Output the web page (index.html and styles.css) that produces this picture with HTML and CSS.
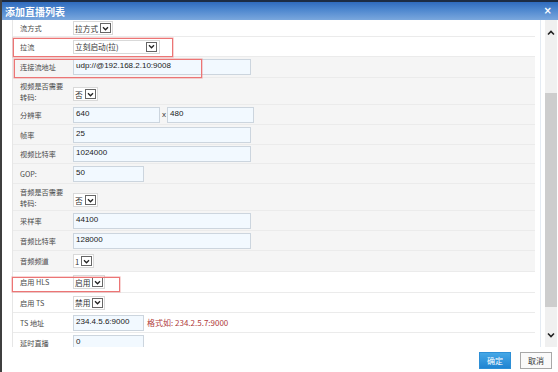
FILE: index.html
```html
<!DOCTYPE html>
<html lang="zh-CN">
<head>
    <meta charset="UTF-8">
    <title>添加直播列表</title>
    <link rel="stylesheet" href="styles.css">
</head>
<body>

    <div class="dialog">
        <!-- Title bar -->
        <div class="titlebar">
            <span class="title">添加直播列表</span>
            <span class="close">×</span>
        </div>

        <div class="main">
            <div class="scroll">
                <div class="form">
                    <div class="row h17">
                        <div class="label">流方式</div>
                        <div class="field"><span class="select">拉方式<i class="arrow"><svg viewBox="0 0 8 6"><path d="M1 1.5 L4 4.5 L7 1.5" /></svg></i></span></div>
                    </div>
                    <div class="row h20">
                        <div class="label">拉流</div>
                        <div class="field"><span class="select w87">立刻启动(拉)<i class="arrow"><svg viewBox="0 0 8 6"><path d="M1 1.5 L4 4.5 L7 1.5" /></svg></i></span></div>
                    </div>
                    <div class="row h21 gray">
                        <div class="label">连接流地址</div>
                        <div class="field"><span class="input long">udp://@192.168.2.10:9008</span></div>
                    </div>
                    <div class="row h27 gray">
                        <div class="label two">视频是否需要<br>转码:</div>
                        <div class="field"><span class="select low">否<i class="arrow"><svg viewBox="0 0 8 6"><path d="M1 1.5 L4 4.5 L7 1.5" /></svg></i></span></div>
                    </div>
                    <div class="row h20 gray">
                        <div class="label">分辨率</div>
                        <div class="field"><span class="input half">640</span><span class="times">x</span><span class="input half">480</span></div>
                    </div>
                    <div class="row h20 gray">
                        <div class="label">帧率</div>
                        <div class="field"><span class="input long">25</span></div>
                    </div>
                    <div class="row h19 gray">
                        <div class="label">视频比特率</div>
                        <div class="field"><span class="input long">1024000</span></div>
                    </div>
                    <div class="row h20 gray">
                        <div class="label">GOP:</div>
                        <div class="field"><span class="input short">50</span></div>
                    </div>
                    <div class="row h27 gray">
                        <div class="label two">音频是否需要<br>转码:</div>
                        <div class="field"><span class="select low">否<i class="arrow"><svg viewBox="0 0 8 6"><path d="M1 1.5 L4 4.5 L7 1.5" /></svg></i></span></div>
                    </div>
                    <div class="row h20 gray">
                        <div class="label">采样率</div>
                        <div class="field"><span class="input long">44100</span></div>
                    </div>
                    <div class="row h20 gray">
                        <div class="label">音频比特率</div>
                        <div class="field"><span class="input long">128000</span></div>
                    </div>
                    <div class="row h21 gray">
                        <div class="label">音频频道</div>
                        <div class="field"><span class="select">1<i class="arrow"><svg viewBox="0 0 8 6"><path d="M1 1.5 L4 4.5 L7 1.5" /></svg></i></span></div>
                    </div>
                    <div class="row h21">
                        <div class="label">启用 HLS</div>
                        <div class="field"><span class="select">启用<i class="arrow"><svg viewBox="0 0 8 6"><path d="M1 1.5 L4 4.5 L7 1.5" /></svg></i></span></div>
                    </div>
                    <div class="row h20">
                        <div class="label">启用 TS</div>
                        <div class="field"><span class="select">禁用<i class="arrow"><svg viewBox="0 0 8 6"><path d="M1 1.5 L4 4.5 L7 1.5" /></svg></i></span></div>
                    </div>
                    <div class="row h20">
                        <div class="label">TS 地址</div>
                        <div class="field"><span class="input short">234.4.5.6:9000</span><span class="hint">格式如: 234.2.5.7:9000</span></div>
                    </div>
                    <div class="row h20">
                        <div class="label">延时直播</div>
                        <div class="field"><span class="input short">0</span></div>
                    </div>
                </div>

                <!-- red highlight boxes drawn over the form -->
                <div class="mark mark-pull"></div>
                <div class="mark mark-url"></div>
                <div class="mark mark-hls"></div>
            </div>

            <div class="scrollbar">
                <div class="sb-btn"><svg viewBox="0 0 8 6"><path d="M1 4.5 L4 1.5 L7 4.5" /></svg></div>
                <div class="sb-track"><div class="sb-thumb"></div></div>
                <div class="sb-btn"><svg viewBox="0 0 8 6"><path d="M1 1.5 L4 4.5 L7 1.5" /></svg></div>
            </div>
        </div>

        <div class="footer">
            <button class="btn btn-ok">确定</button>
            <button class="btn btn-cancel">取消</button>
        </div>
    </div>

</body>
</html>
```

FILE: styles.css
```css
* {
    margin: 0;
    padding: 0;
    box-sizing: border-box;
}

body {
    width: 558px;
    height: 372px;
    background: #fff;
    font-family: "Noto Sans CJK SC", "Liberation Sans", sans-serif;
    font-size: 8px;
    color: #444;
    overflow: hidden;
}

.dialog {
    width: 558px;
    height: 372px;
    border-left: 2px solid #3f3f3f;
    display: flex;
    flex-direction: column;
}

/* Title bar */
.titlebar {
    height: 20px;
    flex: none;
    background: linear-gradient(#2f6bbd, #4f88cf 45%, #7aa7dd);
    border-top: 2px solid #1c2c44;
    display: flex;
    align-items: center;
    justify-content: space-between;
    padding: 0 6px 0 3px;
    color: #fff;
}

.title {
    font-size: 10px;
    font-weight: bold;
}

.close {
    font-family: "DejaVu Sans", sans-serif;
    font-size: 10px;
    font-weight: bold;
    line-height: 1;
}

/* Body */
.main {
    height: 327px;
    flex: none;
    display: flex;
}

.scroll {
    position: relative;
    flex: 1;
    overflow: hidden;
    border-right: 1px solid #e3eaf2;
    padding-left: 10px;
    padding-right: 5px;
}

.form {
    border-left: 1px solid #e6e6e6;
}

.row {
    display: grid;
    grid-template-columns: 60px 1fr;
    border-bottom: 1px solid #ebebeb;
}

.row.gray {
    background: #f5f5f5;
}

.h17 { height: 17px; }
.h19 { height: 19px; }
.h20 { height: 20px; }
.h21 { height: 21px; }
.h27 { height: 27px; }

.label {
    display: flex;
    align-items: center;
    padding-left: 7px;
    color: #4a4a4a;
    font-size: 7.2px;
    white-space: nowrap;
}

.label.two {
    line-height: 11px;
    padding-top: 1px;
}

.field {
    display: flex;
    align-items: center;
}

/* text inputs */
.input {
    height: 16px;
    border: 1px solid #ccd5de;
    background: #f2f9ff;
    font-family: "Liberation Sans", sans-serif;
    font-size: 8px;
    color: #1a1a1a;
    padding: 1px 2px;
    line-height: 10px;
    align-self: center;
}

.input.long { width: 178px; }
.input.half { width: 87px; }
.input.short { width: 71px; }

.times {
    font-family: "Liberation Sans", sans-serif;
    font-size: 8px;
    color: #333;
    padding: 0 1px 0 2px;
}

.hint {
    margin-left: 3px;
    color: #b03a3a;
    font-size: 8px;
}

/* select boxes */
.select {
    display: inline-flex;
    align-items: center;
    justify-content: space-between;
    height: 14px;
    border: 1px solid #d9d9d9;
    background: #fff;
    padding: 0 1px;
    font-size: 7.7px;
    color: #333;
    gap: 2px;
}

.select.w87 {
    width: 87px;
    padding-right: 2px;
}

.select.low {
    margin-top: 6px;
}

.arrow {
    width: 11px;
    height: 10px;
    border: 1px solid #666;
    background: #fff;
    display: flex;
    align-items: center;
    justify-content: center;
}

.arrow svg {
    width: 7px;
    height: 5px;
}

.arrow path, .sb-btn path {
    fill: none;
    stroke: #222;
    stroke-width: 1.6;
}

/* red highlight boxes */
.mark {
    position: absolute;
    border: 1px solid #ec7575;
    box-shadow: 0 0 0 0.6px rgba(236, 117, 117, 0.5);
}

.mark-pull {
    left: 11px;
    top: 18px;
    width: 160px;
    height: 19px;
}

.mark-url {
    left: 12px;
    top: 39px;
    width: 188px;
    height: 19px;
}

.mark-hls {
    left: 10px;
    top: 257px;
    width: 108px;
    height: 15px;
}

/* scrollbar */
.scrollbar {
    width: 12px;
    margin-left: 4px;
    margin-right: 1px;
    background: #f0f0f0;
    display: flex;
    flex-direction: column;
}

.sb-btn {
    height: 25px;
    display: flex;
    align-items: center;
    justify-content: center;
}

.sb-btn svg {
    width: 8px;
    height: 6px;
}

.sb-track {
    flex: 1;
    padding: 48px 0 15px;
    display: flex;
}

.sb-thumb {
    flex: 1;
    background: #cdcdcd;
}

/* footer */
.footer {
    height: 25px;
    flex: none;
    display: flex;
    justify-content: flex-end;
    align-items: center;
    gap: 9px;
    padding-right: 6px;
    padding-top: 1px;
}

.btn {
    width: 32px;
    height: 17px;
    font-family: "Noto Sans CJK SC", sans-serif;
    font-size: 8px;
    cursor: pointer;
}

.btn-ok {
    background: linear-gradient(#45a7e6, #1f84d2);
    border: 1px solid #2d8fd6;
    color: #fff;
}

.btn-cancel {
    background: #fafafa;
    border: 1px solid #a8a8a8;
    color: #333;
}
```
